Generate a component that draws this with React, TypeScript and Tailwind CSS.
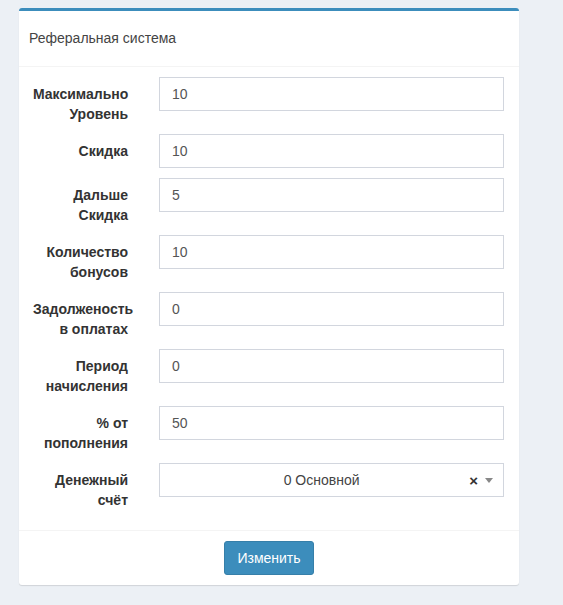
import React from "react";

const rows: { label: string[]; value: string }[] = [
  { label: ["Максимально", "Уровень"], value: "10" },
  { label: ["Скидка"], value: "10" },
  { label: ["Дальше", "Скидка"], value: "5" },
  { label: ["Количество", "бонусов"], value: "10" },
  { label: ["Задолженость", "в оплатах"], value: "0" },
  { label: ["Период", "начисления"], value: "0" },
  { label: ["% от", "пополнения"], value: "50" },
];

function Label({ lines }: { lines: string[] }) {
  return (
    <div className="w-[95px] shrink-0 pt-[7px] text-right text-[14px] font-bold leading-[20px] text-[#333]">
      {lines.map((l, i) => (
        <div key={i} className="whitespace-nowrap">
          {l}
        </div>
      ))}
    </div>
  );
}

export default function App() {
  return (
    <div
      className="min-h-[605px] bg-[#ecf0f5] pt-[8px] pl-[19px]"
      style={{ fontFamily: '"Liberation Sans", Arial, sans-serif' }}
    >
      <div className="w-[500px] rounded-[3px] border-t-[3px] border-[#3c8dbc] bg-white shadow-[0_1px_1px_rgba(0,0,0,0.12)]">
        <div className="flex h-[56px] items-center border-b border-[#f4f4f4] px-[10px] text-[14px] text-[#444]">
          Реферальная система
        </div>
        <div className="flex flex-col gap-[10px] pt-[10px] pb-[20px] pl-[14px] pr-[15px]">
          {rows.map((r, i) => (
            <div key={i} className="flex items-start">
              <Label lines={r.label} />
              <div className="ml-[31px] flex h-[34px] flex-1 items-center border border-[#d2d6de] px-[12px] text-[14px] text-[#555]">
                {r.value}
              </div>
            </div>
          ))}
          <div className="flex items-start">
            <Label lines={["Денежный", "счёт"]} />
            <div className="ml-[31px] flex h-[34px] flex-1 items-center border border-[#d2d6de] pl-[16px] pr-[10px] text-[14px] text-[#444]">
              <span className="flex-1 text-center">0 Основной</span>
              <span className="ml-[2px] text-[15px] font-bold leading-none text-[#333]">×</span>
              <span className="ml-[7px] h-0 w-0 border-x-[4px] border-t-[5px] border-x-transparent border-t-[#888]" />
            </div>
          </div>
        </div>
        <div className="flex justify-center border-t border-[#f4f4f4] p-[10px]">
          <button className="h-[34px] rounded-[3px] border border-[#367fa9] bg-[#3c8dbc] px-[12px] text-[14px] text-white">
            Изменить
          </button>
        </div>
      </div>
    </div>
  );
}
